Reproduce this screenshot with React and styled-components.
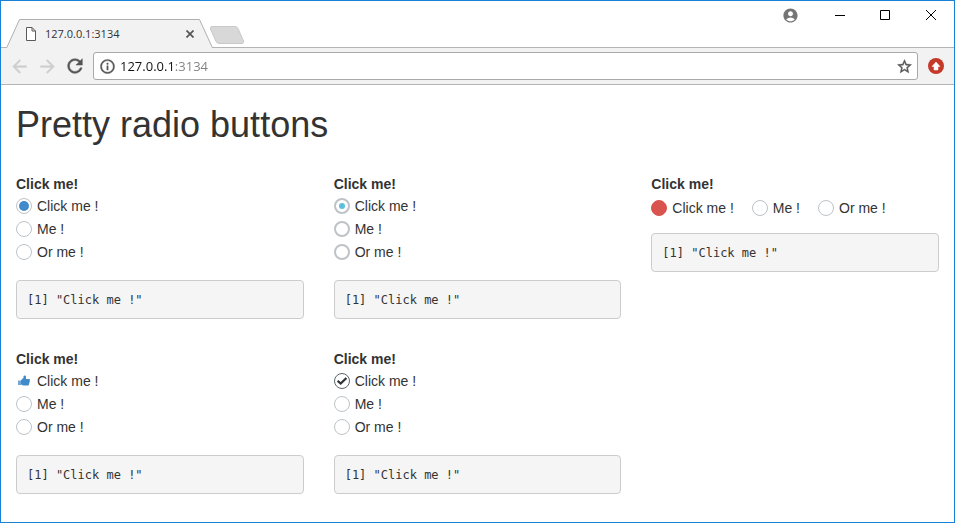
import React, { useId, useState } from "react";
import styled, { createGlobalStyle, css } from "styled-components";
import {
  MdAccountCircle,
  MdArrowBack,
  MdArrowForward,
  MdInfoOutline,
  MdRefresh,
  MdStarBorder,
} from "react-icons/md";

const GlobalStyle = createGlobalStyle`
  *, *::before, *::after { box-sizing: border-box; }
  body { margin: 0; background: #fff; }
  button, input { font: inherit; margin: 0; padding: 0; }
`;

const Window = styled.div`
  display: flex;
  flex-direction: column;
  min-height: 100vh;
  border: 1px solid #1a82d6;
  background: #fff;
  color: #333;
  font: 14px/20px "Liberation Sans", Arial, sans-serif;
`;

/* Browser frame */

const TitleBar = styled.header`
  display: flex;
  justify-content: space-between;
  height: 47px;
  padding-left: 5px;
  border-bottom: 1px solid #b4b4b4;
`;

const TabStrip = styled.div`
  display: flex;
  align-items: flex-end;
`;

const Tab = styled.div`
  position: relative;
  display: flex;
  align-items: center;
  width: 208px;
  height: 29px;
  margin-bottom: -1px;
  padding: 0 18px 0 20px;
  font: 11px/16px "Open Sans", "Noto Sans", sans-serif;
`;

const TabShape = styled.svg`
  position: absolute;
  inset: 0;
`;

const TabTitle = styled.span`
  position: relative;
  flex: 1;
  margin-left: 9px;
`;

const IconButton = styled.button`
  position: relative;
  display: flex;
  flex: none;
  align-items: center;
  justify-content: center;
  width: ${(p) => p.$width}px;
  height: ${(p) => p.$height || p.$width}px;
  border: 0;
  background: none;
  color: ${(p) => p.$color || "#555"};
`;

const FileIcon = styled.svg`
  position: relative;
  flex: none;
`;

const NewTab = styled(IconButton)`
  align-self: flex-end;
  margin: 0 0 3px -5px;
`;

const WindowControls = styled.div`
  display: flex;
  height: 28px;
`;

const Toolbar = styled.nav`
  display: flex;
  align-items: center;
  height: 37px;
  padding: 0 7px 0 4px;
  background: #f2f2f2;
  border-bottom: 1px solid #b4b4b4;

  & path:not([fill="none"]) {
    stroke: currentColor;
    stroke-width: 0.5;
  }
`;

const AddressBox = styled.div`
  display: flex;
  flex: 1;
  align-items: center;
  height: 28px;
  margin: 0 7px 0 4px;
  padding: 0 3px;
  background: #fff;
  border: 1px solid #a9a9a9;
  border-radius: 3px;
`;

const AddressInput = styled.input`
  flex: 1;
  min-width: 0;
  height: 20px;
  margin-left: 3px;
  border: 0;
  outline: 0;
  background: linear-gradient(90deg, #111 55px, #808080 55px);
  background-clip: text;
  color: transparent;
  caret-color: #111;
  font: 13px/20px "Open Sans", "Noto Sans", sans-serif;
`;

/* Page */

const Page = styled.main`
  padding: 20px 15px 28px;
`;

const Heading = styled.h1`
  margin: 0 0 29px;
  color: #333;
  font-size: 36px;
  font-weight: 400;
  line-height: 40px;
`;

const Grid = styled.div`
  display: grid;
  grid-template-columns: repeat(3, minmax(0, 1fr));
  align-items: start;
  gap: 30px;
`;

const Group = styled.fieldset`
  min-width: 0;
  margin: 0;
  padding: 0;
  border: 0;
`;

const Legend = styled.legend`
  padding: 0;
  font-weight: 700;
`;

const Options = styled.div`
  display: flex;
  flex-direction: ${(p) => (p.$inline ? "row" : "column")};
  flex-wrap: wrap;
  gap: 7px 18px;
  margin: ${(p) => (p.$inline ? "6px 0 17px" : "4px 0 20px")};
`;

const Option = styled.label`
  display: flex;
  gap: 5px;
  line-height: 16px;
`;

const Mark = styled.span`
  display: grid;
  flex: none;
  place-items: center;
  width: 16px;
  height: 16px;

  & > * {
    grid-area: 1 / 1;
  }

  & > svg {
    pointer-events: none;
  }
`;

const variants = {
  dot: css`
    &:checked::before { width: 10px; height: 10px; background: #428bca; }
  `,
  thick: css`
    border-width: 2px;
    &:checked::before { width: 6px; height: 6px; background: #5bc0de; }
  `,
  fill: css`
    &:checked { border-color: #d9534f; background: #d9534f; }
  `,
  thumb: css`
    &:checked { border-color: transparent; }
  `,
  check: css`
    &:checked { border-color: #5a656b; }
  `,
};

const Radio = styled.input`
  appearance: none;
  display: grid;
  place-items: center;
  width: 16px;
  height: 16px;
  border: 1px solid #bdc3c7;
  border-radius: 50%;

  &::before {
    content: "";
    border-radius: 50%;
  }

  ${(p) => variants[p.$variant]}
`;

const Output = styled.pre`
  margin: 0;
  padding: 10px 10px 8px;
  overflow: auto;
  border: 1px solid #ccc;
  border-radius: 4px;
  background: #f5f5f5;
  color: #333;
  font: 12px/19px "DejaVu Sans Mono", monospace;
`;

const ThumbIcon = () => (
  <svg width="12" height="12" viewBox="0 0 12 12" fill="#428bca" aria-hidden="true">
    <path d="M0 5.500H3V10H0z" opacity=".75" />
    <path d="M3 5.200 5.500 2.800V1.200C5.800.3 8 .3 8 1.800V4H11c1.200 0 1.200 1.500.5 1.800.5.3.4 1.200-.2 1.500.4.4.2 1.200-.4 1.500.2.900-.2 1.700-1.100 1.700H5.500L3 9.600z" />
  </svg>
);

const CheckIcon = () => (
  <svg width="10" height="10" viewBox="0 0 10 10" fill="none" stroke="#333" strokeWidth="2.200" aria-hidden="true">
    <path d="M.6 4.800 3.700 7.600 9.400 2" />
  </svg>
);

const icons = { thumb: ThumbIcon, check: CheckIcon };
const choices = ["Click me !", "Me !", "Or me !"];

function RadioGroup({ variant, inline }) {
  const name = useId();
  const [value, setValue] = useState(choices[0]);
  const Icon = icons[variant];
  return (
    <Group>
      <Legend>Click me!</Legend>
      <Options $inline={inline}>
        {choices.map((choice) => (
          <Option key={choice}>
            <Mark>
              <Radio
                type="radio"
                name={name}
                value={choice}
                checked={value === choice}
                onChange={() => setValue(choice)}
                $variant={variant}
              />
              {Icon && value === choice && <Icon />}
            </Mark>
            {choice}
          </Option>
        ))}
      </Options>
      <Output>{`[1] "${value}"`}</Output>
    </Group>
  );
}

function BrowserFrame() {
  const [address, setAddress] = useState("127.0.0.1:3134");
  return (
    <>
      <TitleBar>
        <TabStrip>
          <Tab>
            <TabShape width="208" height="29" viewBox="0 0 208 29" aria-hidden="true">
              <path d="M.5 29 13.500.5H193.500L206.500 29z" fill="#f2f2f2" />
              <path d="M0 28.500H.800L13.500.5H193.500L206.300 28.500H208" fill="none" stroke="#b0b0b0" />
            </TabShape>
            <FileIcon width="10" height="14" viewBox="0 0 10 14" fill="#fff" stroke="#5a5a5a" aria-hidden="true">
              <path d="M.5 .5H6L9.500 4V13.500H.5zM6 .5V4H9.500" />
            </FileIcon>
            <TabTitle>127.0.0.1:3134</TabTitle>
            <IconButton $width={12} aria-label="Close tab">
              <svg width="8" height="8" viewBox="0 0 8 8" stroke="currentColor" strokeWidth="1.700">
                <path d="M.5.5l7 7M7.500.5l-7 7" />
              </svg>
            </IconButton>
          </Tab>
          <NewTab $width={36} $height={18} aria-label="New tab">
            <svg width="36" height="18" viewBox="0 0 36 18">
              <path d="M3 .5H26Q28 .5 29 2.500L34.500 15Q35 17.500 33 17.500H10Q8 17.500 7 15.500L1.500 3Q.8.5 3 .5z" fill="#d8d8d8" stroke="#c9c9c9" />
            </svg>
          </NewTab>
        </TabStrip>
        <WindowControls>
          <IconButton $width={54} $height={28} $color="#757575" aria-label="Account">
            <MdAccountCircle size={17} />
          </IconButton>
          <IconButton $width={45} $height={28} $color="#000" aria-label="Minimize">
            <svg width="10" height="10" viewBox="0 0 10 10" stroke="currentColor"><path d="M0 5.500H10" /></svg>
          </IconButton>
          <IconButton $width={46} $height={28} $color="#000" aria-label="Maximize">
            <svg width="10" height="10" viewBox="0 0 10 10" stroke="currentColor" fill="none"><path d="M.5.5H9.500V9.500H.5z" /></svg>
          </IconButton>
          <IconButton $width={46} $height={28} $color="#000" aria-label="Close">
            <svg width="10" height="10" viewBox="0 0 10 10" stroke="currentColor"><path d="M0 0 10 10M10 0 0 10" /></svg>
          </IconButton>
        </WindowControls>
      </TitleBar>
      <Toolbar aria-label="Navigation">
        <IconButton $width={28} $color="#cfcfcf" aria-label="Back"><MdArrowBack size={21} /></IconButton>
        <IconButton $width={28} $color="#cfcfcf" aria-label="Forward"><MdArrowForward size={21} /></IconButton>
        <IconButton $width={28} aria-label="Reload"><MdRefresh size={22} /></IconButton>
        <AddressBox>
          <IconButton $width={20} aria-label="Site information"><MdInfoOutline size={17} /></IconButton>
          <AddressInput
            type="text"
            aria-label="Address"
            value={address}
            onChange={(e) => setAddress(e.target.value)}
          />
          <IconButton $width={20} aria-label="Bookmark"><MdStarBorder size={17} /></IconButton>
        </AddressBox>
        <IconButton $width={22} $color="#fff" aria-label="Update">
          <svg width="16" height="16" viewBox="0 0 16 16">
            <circle cx="8" cy="8" r="8" fill="#c53929" />
            <path d="M8 4 12 8.500H10V12H6V8.500H4z" fill="#fff" />
          </svg>
        </IconButton>
      </Toolbar>
    </>
  );
}

export default function App() {
  return (
    <Window>
      <GlobalStyle />
      <BrowserFrame />
      <Page>
        <Heading>Pretty radio buttons</Heading>
        <Grid>
          <RadioGroup variant="dot" />
          <RadioGroup variant="thick" />
          <RadioGroup variant="fill" inline />
          <RadioGroup variant="thumb" />
          <RadioGroup variant="check" />
        </Grid>
      </Page>
    </Window>
  );
}
